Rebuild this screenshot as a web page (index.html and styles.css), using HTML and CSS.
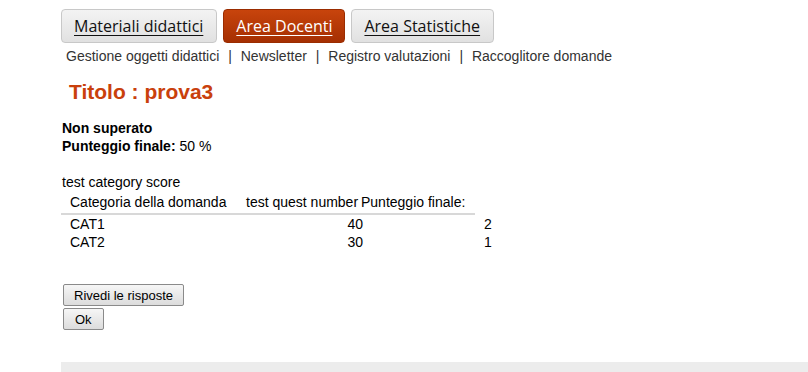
FILE: index.html
```html
<!DOCTYPE html>
<html lang="it">
<head>
    <meta charset="UTF-8">
    <title>Risultato test</title>
    <link rel="stylesheet" href="styles.css">
</head>
<body>

    <!-- Menu principale -->
    <div class="page">
        <div class="tabs">
            <a class="tab" href="#">Materiali didattici</a>
            <a class="tab active" href="#">Area Docenti</a>
            <a class="tab" href="#">Area Statistiche</a>
        </div>

        <div class="submenu">
            <a href="#">Gestione oggetti didattici</a>
            <span class="sep">|</span>
            <a href="#">Newsletter</a>
            <span class="sep">|</span>
            <a href="#">Registro valutazioni</a>
            <span class="sep">|</span>
            <a href="#">Raccoglitore domande</a>
        </div>

        <h1 class="title">Titolo : prova3</h1>

        <!-- Esito -->
        <div class="result">
            <div><b>Non superato</b></div>
            <div><b>Punteggio finale:</b> 50 %</div>
        </div>

        <div class="category">
            <div>test category score</div>
            <table class="score-table">
                <tr>
                    <th class="col-cat">Categoria della domanda</th>
                    <th class="col-num">test quest number</th>
                    <th class="col-score">Punteggio finale:</th>
                </tr>
                <tr>
                    <td>CAT1</td>
                    <td class="num">40</td>
                    <td></td>
                    <td class="num">2</td>
                </tr>
                <tr>
                    <td>CAT2</td>
                    <td class="num">30</td>
                    <td></td>
                    <td class="num">1</td>
                </tr>
            </table>
        </div>

        <div class="actions">
            <button class="btn">Rivedi le risposte</button>
            <button class="btn btn-ok">Ok</button>
        </div>

        <div class="footer-bar"></div>
    </div>

</body>
</html>
```

FILE: styles.css
```css
body {
    margin: 0;
    padding: 0;
    font-family: 'Liberation Sans', Arial, sans-serif;
    font-size: 14px;
    color: #000;
    background: #fff;
}

.page {
    padding-left: 61px;
    padding-top: 9px;
}

/* Schede in alto */
.tabs {
    display: flex;
    gap: 6px;
}

.tab {
    display: block;
    height: 32px;
    line-height: 32px;
    padding: 0 12px;
    font-family: 'Open Sans', sans-serif;
    font-size: 16px;
    color: #111;
    text-decoration: underline;
    text-underline-offset: 3px;
    background: linear-gradient(#f3f3f3, #e1e1e1);
    border: 1px solid #c8c8c8;
    border-radius: 4px;
}

.tab:first-child {
    padding: 0 13px 0 12px;
}

.tab:last-child {
    padding: 0 13px 0 12px;
}

.tab.active {
    color: #fff;
    background: linear-gradient(#c8440c, #a52f02);
    border-color: #9a2c00;
}

.submenu {
    margin-top: 5px;
    padding-left: 5px;
    font-size: 14px;
    color: #333;
}

.submenu a {
    color: #333;
    text-decoration: none;
}

.submenu .sep {
    margin: 0 5px;
}

.title {
    margin: 16px 0 0 8px;
    font-size: 21px;
    font-weight: bold;
    color: #c9400c;
}

.result {
    margin-top: 15px;
    margin-left: 1px;
    line-height: 18px;
}

.category {
    margin-top: 18px;
    margin-left: 1px;
    line-height: 18px;
}

.score-table {
    border-collapse: collapse;
    margin-top: 1px;
    margin-left: -1px;
}

.score-table th {
    font-weight: normal;
    text-align: left;
    padding: 1px 0 2px 9px;
    border-bottom: 2px solid #d8d8d8;
}

.score-table th.col-score {
    padding-left: 0;
    text-indent: -2px;
}

.score-table td {
    padding: 0 0 0 9px;
}

.score-table td.num {
    text-align: right;
}

.col-cat {
    width: 167px;
}

.col-num {
    width: 117px;
}

.col-score {
    width: 112px;
}

.actions {
    margin-top: 33px;
    margin-left: 2px;
    display: flex;
    flex-direction: column;
    align-items: flex-start;
    gap: 2px;
}

.btn {
    font-family: 'Liberation Sans', Arial, sans-serif;
    font-size: 13px;
    color: #000;
    padding: 0 10px;
    height: 22px;
    border: 1px solid #8a8a8a;
    border-radius: 2px;
    background: linear-gradient(#f6f6f6, #dcdcdc);
}

.btn-ok {
    padding: 0 11px;
}

.footer-bar {
    margin-top: 32px;
    height: 12px;
    background: #ececec;
}
```
